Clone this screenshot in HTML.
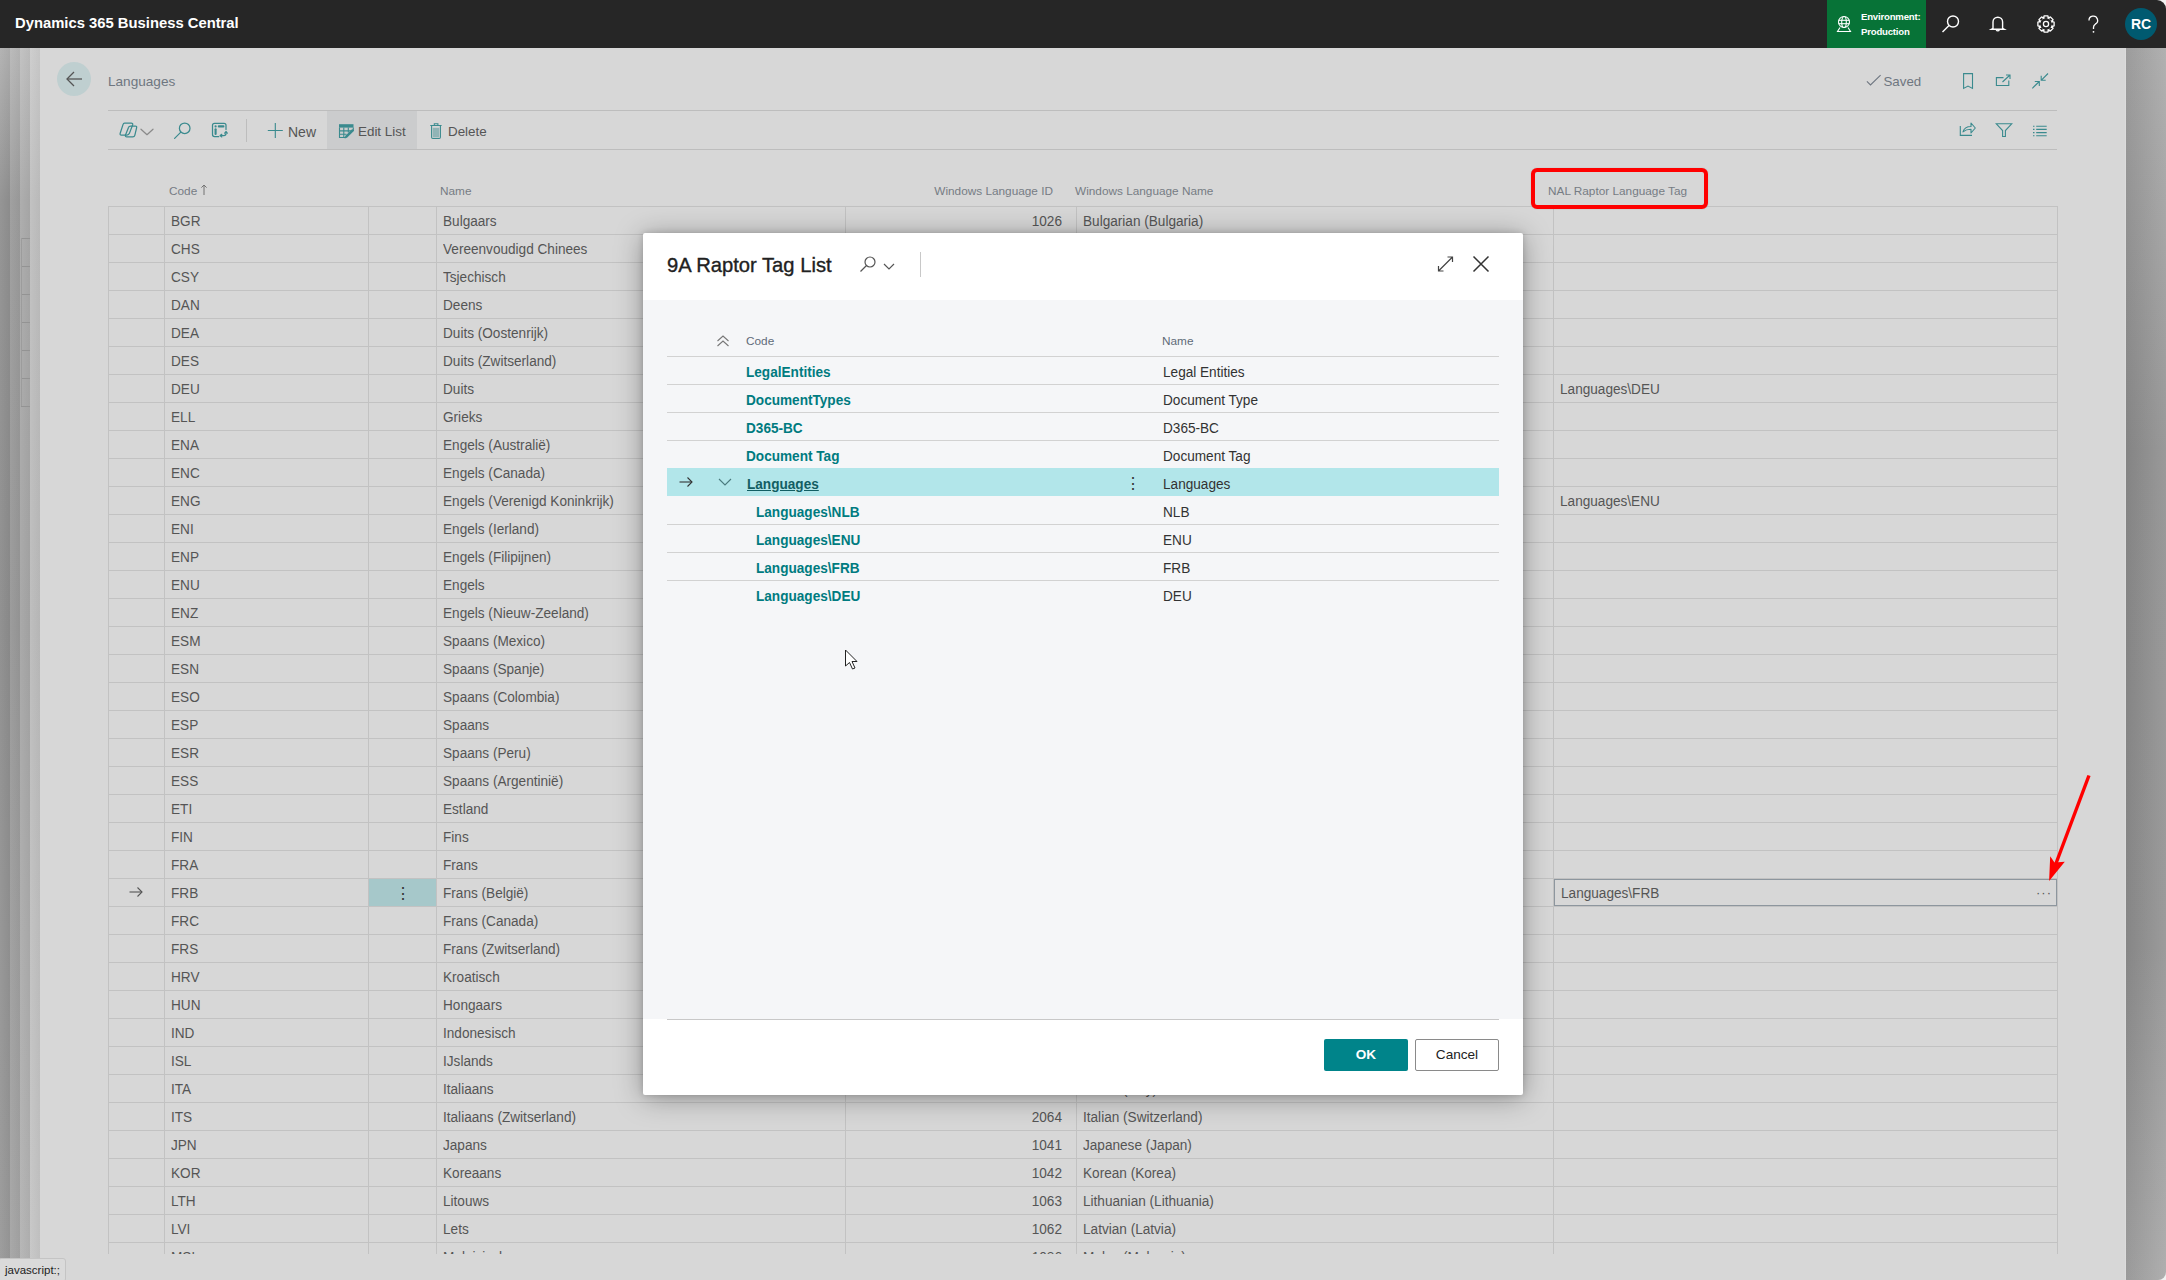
<!DOCTYPE html><html><head><meta charset="utf-8"><style>
*{box-sizing:border-box;margin:0;padding:0}
html,body{width:2166px;height:1280px;overflow:hidden;background:#d6d6d6;font-family:"Liberation Sans",sans-serif;}
.a{position:absolute}
.t{position:absolute;white-space:nowrap;line-height:1}
#top{left:0;top:0;width:2166px;height:48px;background:#262626;border-top-right-radius:9px}
#panel{left:40px;top:48px;width:2085px;height:1232px;background:#d7d7d7}
.hl{position:absolute;height:1px;background:#c2c2c2}
.vl{position:absolute;width:1px;background:#c2c2c2}
.g{font-size:14px;color:#555;transform:scaleX(0.9714);transform-origin:0 0}
.gr{transform-origin:100% 0}
.gh{font-size:11.8px;color:#767c84;}
.dt{font-size:14px;font-weight:bold;color:#007b80;transform:scaleX(0.9714);transform-origin:0 0}
.dn{font-size:14px;color:#323232;transform:scaleX(0.9714);transform-origin:0 0}
</style></head><body><div class="a" style="left:2150px;top:0;width:16px;height:16px;background:#f2f2f2"></div>
<div class="a" id="top"></div>
<div class="t" style="left:15px;top:15.5px;font-size:14.8px;font-weight:bold;color:#fff">Dynamics 365 Business Central</div>
<div class="a" style="left:1827px;top:0;width:99px;height:48px;background:#077337"></div>
<div class="t" style="left:1861px;top:12.3px;font-size:9.6px;font-weight:bold;color:#fff;letter-spacing:-0.2px">Environment:</div>
<div class="t" style="left:1861px;top:27.3px;font-size:9.6px;font-weight:bold;color:#fff;letter-spacing:-0.2px">Production</div>
<svg class="a" style="left:1835px;top:15px" width="18" height="18" viewBox="0 0 18 18" fill="none" stroke="#fff" stroke-width="1.1">
<circle cx="9" cy="7" r="5.5"/><ellipse cx="9" cy="7" rx="2.3" ry="5.5"/><line x1="3.5" y1="5.3" x2="14.5" y2="5.3"/><line x1="3.5" y1="8.7" x2="14.5" y2="8.7"/>
<path d="M5 12.5 L2.5 16.5 H15.5 L13 12.5"/></svg>
<svg class="a" style="left:1940px;top:13px" width="22" height="22" viewBox="0 0 22 22" fill="none" stroke="#fff" stroke-width="1.4">
<circle cx="13" cy="8.5" r="5.5"/><line x1="9" y1="12.5" x2="2.5" y2="19"/></svg>
<svg class="a" style="left:1987px;top:13px" width="22" height="22" viewBox="0 0 22 22" fill="none" stroke="#fff" stroke-width="1.4">
<path d="M6 15.3 V9 A4.8 4.8 0 0 1 15.6 9 V15.3 L17.3 16.3 H4.3 Z"/><path d="M9.3 16.8 A1.6 1.6 0 0 0 12.3 16.8"/></svg>
<svg class="a" style="left:2035px;top:13px" width="22" height="22" viewBox="0 0 22 22" fill="none" stroke="#fff" stroke-width="1.3">
<path d="M19.10 9.19 L19.10 12.81 L16.67 13.74 L16.95 13.07 L18.01 15.45 L15.45 18.01 L13.07 16.95 L13.74 16.67 L12.81 19.10 L9.19 19.10 L8.26 16.67 L8.93 16.95 L6.55 18.01 L3.99 15.45 L5.05 13.07 L5.33 13.74 L2.90 12.81 L2.90 9.19 L5.33 8.26 L5.05 8.93 L3.99 6.55 L6.55 3.99 L8.93 5.05 L8.26 5.33 L9.19 2.90 L12.81 2.90 L13.74 5.33 L13.07 5.05 L15.45 3.99 L18.01 6.55 L16.95 8.93 L16.67 8.26 Z"/><circle cx="11" cy="11" r="2.6"/></svg>
<svg class="a" style="left:2083px;top:12px" width="20" height="24" viewBox="0 0 20 24" fill="none" stroke="#fff" stroke-width="1.3"><path d="M6 8.5 A4.3 4.3 0 1 1 12.3 12.2 Q10.5 13.3 10.5 15.5 V17"/><circle cx="10.5" cy="19.8" r="0.9" fill="#fff" stroke="none"/></svg>
<div class="a" style="left:2125px;top:8px;width:32px;height:32px;border-radius:50%;background:#005a70"></div>
<div class="t" style="left:2131px;top:17px;font-size:14px;font-weight:bold;color:#fff">RC</div>
<div class="a" style="left:0px;top:48px;width:10px;height:1232px;background:linear-gradient(90deg,rgba(255,255,255,0.05),rgba(0,0,0,0.03)),linear-gradient(180deg,#b0b0b0 0px,#909090 152px,#8c8c8c 582px,#999999 1232px)"></div>
<div class="a" style="left:10px;top:48px;width:10px;height:1232px;background:linear-gradient(90deg,rgba(255,255,255,0.05),rgba(0,0,0,0.03)),linear-gradient(180deg,#b8b8b8 0px,#9c9c9c 152px,#979797 582px,#a5a5a5 1232px)"></div>
<div class="a" style="left:20px;top:48px;width:10px;height:1232px;background:linear-gradient(90deg,rgba(255,255,255,0.05),rgba(0,0,0,0.03)),linear-gradient(180deg,#c0c0c0 0px,#aaaaaa 152px,#a5a5a5 582px,#b4b4b4 1232px)"></div>
<div class="a" style="left:30px;top:48px;width:10px;height:1232px;background:linear-gradient(90deg,rgba(255,255,255,0.05),rgba(0,0,0,0.03)),linear-gradient(180deg,#cccccc 0px,#bfbfbf 152px,#bbbbbb 582px,#c6c6c6 1232px)"></div>
<div class="a" style="left:21px;top:238px;width:9px;height:1px;background:#939393"></div>
<div class="a" style="left:21px;top:266px;width:9px;height:1px;background:#939393"></div>
<div class="a" style="left:21px;top:294px;width:9px;height:1px;background:#939393"></div>
<div class="a" style="left:21px;top:322px;width:9px;height:1px;background:#939393"></div>
<div class="a" style="left:21px;top:350px;width:9px;height:1px;background:#939393"></div>
<div class="a" style="left:21px;top:378px;width:9px;height:1px;background:#939393"></div>
<div class="a" style="left:21px;top:406px;width:9px;height:1px;background:#939393"></div>
<div class="a" style="left:21px;top:238px;width:1px;height:168px;background:#9c9c9c"></div>
<div class="a" style="left:2150px;top:1264px;width:16px;height:16px;background:#f2f2f2"></div>
<div class="a" style="left:2126px;top:48px;width:40px;height:1232px;background:linear-gradient(90deg,rgba(0,0,0,0.07),rgba(255,255,255,0.10)),linear-gradient(180deg,#a8a8a8 0px,#8e8e8e 400px,#909090 900px,#a6a6a6 1232px);border-bottom-right-radius:8px"></div>
<div class="a" style="left:2125px;top:48px;width:1px;height:1232px;background:#dcdcdc"></div>
<div class="a" id="panel"></div>
<div class="a" style="left:57px;top:62px;width:34px;height:34px;border-radius:50%;background:#bfcfd0"></div>
<svg class="a" style="left:64px;top:69px" width="20" height="20" viewBox="0 0 20 20" fill="none" stroke="#555" stroke-width="1.3">
<line x1="3" y1="10" x2="18" y2="10"/><path d="M10 3 L3 10 L10 17"/></svg>
<div class="t" style="left:108px;top:75px;font-size:13.6px;color:#6e7680">Languages</div>
<div class="hl" style="left:108px;top:110px;width:1949px;background:#bdbdbd"></div>
<div class="hl" style="left:108px;top:149px;width:1949px;background:#bdbdbd"></div>
<svg class="a" style="left:1850px;top:60px" width="210" height="90" viewBox="1850 60 210 90" fill="none" stroke-width="1.1">
<path d="M1866.9 81.3 L1870.5 84.9 L1880.6 75.2" stroke="#6e7680"/>
<path d="M1963.6 73.6 H1972.5 V88.4 L1968 86 L1963.6 88.4 Z" stroke="#3a8a8e"/>
<path d="M2003.5 77.6 H1996.4 V85.5 H2008.8 V80.5" stroke="#3a8a8e"/>
<path d="M2002.5 82 L2010 75 M2006 75 H2010 V79" stroke="#3a8a8e"/>
<path d="M2048 73.5 L2041.2 80.3 M2041.2 75.8 V80.3 H2045.7" stroke="#3a8a8e"/>
<path d="M2032.3 88.3 L2039.3 81.5 M2034.8 81.5 H2039.3 V86" stroke="#3a8a8e"/>
<path d="M1960.3 126 V135.4 H1972" stroke="#3a8a8e"/>
<path d="M1963 131.8 Q1964.5 126.5 1971 126.5 V123 L1975.3 128 L1971 133 V129.3 Q1966 129.3 1963 131.8 Z" stroke="#3a8a8e" stroke-linejoin="round"/>
<path d="M1996.3 123.8 H2011.7 L2005.4 130.5 V136.5 H2002.6 V130.5 Z" stroke="#3a8a8e"/>
<path d="M2033 126.2 H2034.5 M2036.2 126.2 H2046.7 M2033 129.4 H2034.5 M2036.2 129.4 H2046.7 M2033 132.6 H2034.5 M2036.2 132.6 H2046.7 M2033 135.8 H2034.5 M2036.2 135.8 H2046.7" stroke="#3a8a8e"/>
</svg>
<div class="t" style="left:1883.5px;top:74.5px;font-size:13.3px;color:#6e7680">Saved</div>
<svg class="a" style="left:115px;top:115px" width="120" height="30" viewBox="0 0 120 30" fill="none" stroke-width="1.25" stroke-linejoin="round" stroke-linecap="round">
<path d="M9.5 8.2 H16.2 Q18.2 8.2 17.6 10 L14.3 18.6 Q13.7 20 12 20 H6.5 Q4.6 20 5.2 18.2 L8 9.6 Q8.4 8.2 9.5 8.2 Z" stroke="#3a8a8e"/>
<path d="M15.5 11 H20.3 Q22 11 21.6 12.8 L19.8 20.3 Q19.4 21.8 17.8 21.8 H11.8 Q10 21.8 10.4 20.2 L13.6 12.2 Q14 11 15.5 11 Z" stroke="#3a8a8e"/>
<path d="M26 14.2 L32 19.7 L38 14.2" stroke="#8a8a8a"/>
<circle cx="69.7" cy="13.3" r="5.3" stroke="#3a8a8e"/><line x1="65.6" y1="17.4" x2="59.6" y2="23.4" stroke="#3a8a8e"/>
<path d="M111 14.5 V10.3 Q111 8.3 109 8.3 H99.5 Q97.5 8.3 97.5 10.3 V19.6 Q97.5 21.6 99.5 21.6 H103.8" stroke="#3a8a8e"/>
<circle cx="100.6" cy="11.4" r="1.1" fill="#3a8a8e" stroke="none"/>
<line x1="103.8" y1="11.4" x2="108.4" y2="11.4" stroke="#3a8a8e" stroke-width="2.1"/>
<line x1="100.6" y1="14.3" x2="100.6" y2="19" stroke="#3a8a8e" stroke-width="2.1"/>
<path d="M111 17 V18.5 Q111 20.6 108.8 20.6 H105.5" stroke="#3a8a8e"/>
<path d="M109.7 18.2 L111 16.6 L112.3 18.2 M106.8 19.3 L105.2 20.6 L106.8 21.9" stroke="#3a8a8e"/>
</svg>
<div class="vl" style="left:246px;top:119px;height:23px;background:#bdbdbd"></div>
<div class="t" style="left:288px;top:125px;font-size:14px;color:#555">New</div>
<div class="a" style="left:327px;top:111px;width:90px;height:38px;background:#cbcccd"></div>
<div class="t" style="left:358px;top:125px;font-size:13.4px;color:#555">Edit List</div>
<svg class="a" style="left:260px;top:115px" width="190" height="30" viewBox="260 115 190 30" fill="none" stroke="#3a8a8e" stroke-width="1.1">
<path d="M275.3 123 V138 M267.8 130.5 H282.8"/>
<rect x="339" y="124.2" width="14.5" height="3.4" fill="#3a8a8e" stroke="none"/>
<path d="M339.5 127.5 V137.5 H346 M353.3 127.5 V131 M343.8 127.5 V137.5 M348.3 127.5 V132.5 M339.5 130.9 H352 M339.5 134.3 H346.5"/>
<path d="M345.8 137.2 L353.2 129.8" stroke-width="2.6"/>
<path d="M344.6 138.4 L345.3 136.2 L346.9 137.8 Z" fill="#3a8a8e" stroke="none"/>
<path d="M434.3 125 V123.8 H437.9 V125 M430.3 125.5 H441.6"/>
<path d="M431.6 125.8 V137.3 Q431.6 138.5 432.8 138.5 H439.2 Q440.4 138.5 440.4 137.3 V125.8"/>
<rect x="432.8" y="127.8" width="6.4" height="9.6" fill="#3a8a8e" stroke="none" opacity="0.45"/>
</svg>
<div class="t" style="left:448px;top:125px;font-size:13.4px;color:#555">Delete</div>
<div class="t gh" style="left:169px;top:185.5px">Code</div>
<svg class="a" style="left:199.5px;top:184px" width="8" height="12" viewBox="0 0 8 12" fill="none" stroke="#737373" stroke-width="1"><line x1="4" y1="1" x2="4" y2="11"/><path d="M1.4 3.6 L4 1 L6.6 3.6"/></svg>
<div class="t gh" style="left:440px;top:185.5px">Name</div>
<div class="t gh" style="left:933px;top:185.5px;width:120px;text-align:right">Windows Language ID</div>
<div class="t gh" style="left:1075px;top:185.5px">Windows Language Name</div>
<div class="t gh" style="left:1548px;top:185.5px">NAL Raptor Language Tag</div>
<div class="a" style="left:108px;top:206px;width:1950px;height:1048px;overflow:hidden">
<div class="hl" style="left:0;top:0px;width:1950px"></div>
<div class="hl" style="left:0;top:28px;width:1950px"></div>
<div class="hl" style="left:0;top:56px;width:1950px"></div>
<div class="hl" style="left:0;top:84px;width:1950px"></div>
<div class="hl" style="left:0;top:112px;width:1950px"></div>
<div class="hl" style="left:0;top:140px;width:1950px"></div>
<div class="hl" style="left:0;top:168px;width:1950px"></div>
<div class="hl" style="left:0;top:196px;width:1950px"></div>
<div class="hl" style="left:0;top:224px;width:1950px"></div>
<div class="hl" style="left:0;top:252px;width:1950px"></div>
<div class="hl" style="left:0;top:280px;width:1950px"></div>
<div class="hl" style="left:0;top:308px;width:1950px"></div>
<div class="hl" style="left:0;top:336px;width:1950px"></div>
<div class="hl" style="left:0;top:364px;width:1950px"></div>
<div class="hl" style="left:0;top:392px;width:1950px"></div>
<div class="hl" style="left:0;top:420px;width:1950px"></div>
<div class="hl" style="left:0;top:448px;width:1950px"></div>
<div class="hl" style="left:0;top:476px;width:1950px"></div>
<div class="hl" style="left:0;top:504px;width:1950px"></div>
<div class="hl" style="left:0;top:532px;width:1950px"></div>
<div class="hl" style="left:0;top:560px;width:1950px"></div>
<div class="hl" style="left:0;top:588px;width:1950px"></div>
<div class="hl" style="left:0;top:616px;width:1950px"></div>
<div class="hl" style="left:0;top:644px;width:1950px"></div>
<div class="hl" style="left:0;top:672px;width:1950px"></div>
<div class="hl" style="left:0;top:700px;width:1950px"></div>
<div class="hl" style="left:0;top:728px;width:1950px"></div>
<div class="hl" style="left:0;top:756px;width:1950px"></div>
<div class="hl" style="left:0;top:784px;width:1950px"></div>
<div class="hl" style="left:0;top:812px;width:1950px"></div>
<div class="hl" style="left:0;top:840px;width:1950px"></div>
<div class="hl" style="left:0;top:868px;width:1950px"></div>
<div class="hl" style="left:0;top:896px;width:1950px"></div>
<div class="hl" style="left:0;top:924px;width:1950px"></div>
<div class="hl" style="left:0;top:952px;width:1950px"></div>
<div class="hl" style="left:0;top:980px;width:1950px"></div>
<div class="hl" style="left:0;top:1008px;width:1950px"></div>
<div class="hl" style="left:0;top:1036px;width:1950px"></div>
<div class="hl" style="left:0;top:1064px;width:1950px"></div>
<div class="vl" style="left:0px;top:0;height:1048px"></div>
<div class="vl" style="left:56px;top:0;height:1048px"></div>
<div class="vl" style="left:260px;top:0;height:1048px"></div>
<div class="vl" style="left:328px;top:0;height:1048px"></div>
<div class="vl" style="left:737px;top:0;height:1048px"></div>
<div class="vl" style="left:968px;top:0;height:1048px"></div>
<div class="vl" style="left:1445px;top:0;height:1048px"></div>
<div class="vl" style="left:1949px;top:0;height:1048px"></div>
<div class="t g" style="left:63px;top:8px">BGR</div>
<div class="t g" style="left:335px;top:8px">Bulgaars</div>
<div class="t g gr" style="left:854px;top:8px;width:100px;text-align:right">1026</div>
<div class="t g" style="left:975px;top:8px">Bulgarian (Bulgaria)</div>
<div class="t g" style="left:63px;top:36px">CHS</div>
<div class="t g" style="left:335px;top:36px">Vereenvoudigd Chinees</div>
<div class="t g gr" style="left:854px;top:36px;width:100px;text-align:right">2052</div>
<div class="t g" style="left:975px;top:36px">Chinese (Simplified)</div>
<div class="t g" style="left:63px;top:64px">CSY</div>
<div class="t g" style="left:335px;top:64px">Tsjechisch</div>
<div class="t g gr" style="left:854px;top:64px;width:100px;text-align:right">1029</div>
<div class="t g" style="left:975px;top:64px">Czech (Czech Republic)</div>
<div class="t g" style="left:63px;top:92px">DAN</div>
<div class="t g" style="left:335px;top:92px">Deens</div>
<div class="t g gr" style="left:854px;top:92px;width:100px;text-align:right">1030</div>
<div class="t g" style="left:975px;top:92px">Danish (Denmark)</div>
<div class="t g" style="left:63px;top:120px">DEA</div>
<div class="t g" style="left:335px;top:120px">Duits (Oostenrijk)</div>
<div class="t g gr" style="left:854px;top:120px;width:100px;text-align:right">3079</div>
<div class="t g" style="left:975px;top:120px">German (Austria)</div>
<div class="t g" style="left:63px;top:148px">DES</div>
<div class="t g" style="left:335px;top:148px">Duits (Zwitserland)</div>
<div class="t g gr" style="left:854px;top:148px;width:100px;text-align:right">2055</div>
<div class="t g" style="left:975px;top:148px">German (Switzerland)</div>
<div class="t g" style="left:63px;top:176px">DEU</div>
<div class="t g" style="left:335px;top:176px">Duits</div>
<div class="t g gr" style="left:854px;top:176px;width:100px;text-align:right">1031</div>
<div class="t g" style="left:975px;top:176px">German (Germany)</div>
<div class="t g" style="left:1452px;top:176px">Languages\DEU</div>
<div class="t g" style="left:63px;top:204px">ELL</div>
<div class="t g" style="left:335px;top:204px">Grieks</div>
<div class="t g gr" style="left:854px;top:204px;width:100px;text-align:right">1032</div>
<div class="t g" style="left:975px;top:204px">Greek (Greece)</div>
<div class="t g" style="left:63px;top:232px">ENA</div>
<div class="t g" style="left:335px;top:232px">Engels (Australië)</div>
<div class="t g gr" style="left:854px;top:232px;width:100px;text-align:right">3081</div>
<div class="t g" style="left:975px;top:232px">English (Australia)</div>
<div class="t g" style="left:63px;top:260px">ENC</div>
<div class="t g" style="left:335px;top:260px">Engels (Canada)</div>
<div class="t g gr" style="left:854px;top:260px;width:100px;text-align:right">4105</div>
<div class="t g" style="left:975px;top:260px">English (Canada)</div>
<div class="t g" style="left:63px;top:288px">ENG</div>
<div class="t g" style="left:335px;top:288px">Engels (Verenigd Koninkrijk)</div>
<div class="t g gr" style="left:854px;top:288px;width:100px;text-align:right">2057</div>
<div class="t g" style="left:975px;top:288px">English (United Kingdom)</div>
<div class="t g" style="left:1452px;top:288px">Languages\ENU</div>
<div class="t g" style="left:63px;top:316px">ENI</div>
<div class="t g" style="left:335px;top:316px">Engels (Ierland)</div>
<div class="t g gr" style="left:854px;top:316px;width:100px;text-align:right">6153</div>
<div class="t g" style="left:975px;top:316px">English (Ireland)</div>
<div class="t g" style="left:63px;top:344px">ENP</div>
<div class="t g" style="left:335px;top:344px">Engels (Filipijnen)</div>
<div class="t g gr" style="left:854px;top:344px;width:100px;text-align:right">13321</div>
<div class="t g" style="left:975px;top:344px">English (Philippines)</div>
<div class="t g" style="left:63px;top:372px">ENU</div>
<div class="t g" style="left:335px;top:372px">Engels</div>
<div class="t g gr" style="left:854px;top:372px;width:100px;text-align:right">1033</div>
<div class="t g" style="left:975px;top:372px">English (United States)</div>
<div class="t g" style="left:63px;top:400px">ENZ</div>
<div class="t g" style="left:335px;top:400px">Engels (Nieuw-Zeeland)</div>
<div class="t g gr" style="left:854px;top:400px;width:100px;text-align:right">5129</div>
<div class="t g" style="left:975px;top:400px">English (New Zealand)</div>
<div class="t g" style="left:63px;top:428px">ESM</div>
<div class="t g" style="left:335px;top:428px">Spaans (Mexico)</div>
<div class="t g gr" style="left:854px;top:428px;width:100px;text-align:right">2058</div>
<div class="t g" style="left:975px;top:428px">Spanish (Mexico)</div>
<div class="t g" style="left:63px;top:456px">ESN</div>
<div class="t g" style="left:335px;top:456px">Spaans (Spanje)</div>
<div class="t g gr" style="left:854px;top:456px;width:100px;text-align:right">3082</div>
<div class="t g" style="left:975px;top:456px">Spanish (Spain)</div>
<div class="t g" style="left:63px;top:484px">ESO</div>
<div class="t g" style="left:335px;top:484px">Spaans (Colombia)</div>
<div class="t g gr" style="left:854px;top:484px;width:100px;text-align:right">9226</div>
<div class="t g" style="left:975px;top:484px">Spanish (Colombia)</div>
<div class="t g" style="left:63px;top:512px">ESP</div>
<div class="t g" style="left:335px;top:512px">Spaans</div>
<div class="t g gr" style="left:854px;top:512px;width:100px;text-align:right">1034</div>
<div class="t g" style="left:975px;top:512px">Spanish (Spain)</div>
<div class="t g" style="left:63px;top:540px">ESR</div>
<div class="t g" style="left:335px;top:540px">Spaans (Peru)</div>
<div class="t g gr" style="left:854px;top:540px;width:100px;text-align:right">10250</div>
<div class="t g" style="left:975px;top:540px">Spanish (Peru)</div>
<div class="t g" style="left:63px;top:568px">ESS</div>
<div class="t g" style="left:335px;top:568px">Spaans (Argentinië)</div>
<div class="t g gr" style="left:854px;top:568px;width:100px;text-align:right">11274</div>
<div class="t g" style="left:975px;top:568px">Spanish (Argentina)</div>
<div class="t g" style="left:63px;top:596px">ETI</div>
<div class="t g" style="left:335px;top:596px">Estland</div>
<div class="t g gr" style="left:854px;top:596px;width:100px;text-align:right">1061</div>
<div class="t g" style="left:975px;top:596px">Estonian (Estonia)</div>
<div class="t g" style="left:63px;top:624px">FIN</div>
<div class="t g" style="left:335px;top:624px">Fins</div>
<div class="t g gr" style="left:854px;top:624px;width:100px;text-align:right">1035</div>
<div class="t g" style="left:975px;top:624px">Finnish (Finland)</div>
<div class="t g" style="left:63px;top:652px">FRA</div>
<div class="t g" style="left:335px;top:652px">Frans</div>
<div class="t g gr" style="left:854px;top:652px;width:100px;text-align:right">1036</div>
<div class="t g" style="left:975px;top:652px">French (France)</div>
<div class="t g" style="left:63px;top:680px">FRB</div>
<div class="t g" style="left:335px;top:680px">Frans (België)</div>
<div class="t g gr" style="left:854px;top:680px;width:100px;text-align:right">2060</div>
<div class="t g" style="left:975px;top:680px">French (Belgium)</div>
<div class="t g" style="left:63px;top:708px">FRC</div>
<div class="t g" style="left:335px;top:708px">Frans (Canada)</div>
<div class="t g gr" style="left:854px;top:708px;width:100px;text-align:right">3084</div>
<div class="t g" style="left:975px;top:708px">French (Canada)</div>
<div class="t g" style="left:63px;top:736px">FRS</div>
<div class="t g" style="left:335px;top:736px">Frans (Zwitserland)</div>
<div class="t g gr" style="left:854px;top:736px;width:100px;text-align:right">4108</div>
<div class="t g" style="left:975px;top:736px">French (Switzerland)</div>
<div class="t g" style="left:63px;top:764px">HRV</div>
<div class="t g" style="left:335px;top:764px">Kroatisch</div>
<div class="t g gr" style="left:854px;top:764px;width:100px;text-align:right">1050</div>
<div class="t g" style="left:975px;top:764px">Croatian (Croatia)</div>
<div class="t g" style="left:63px;top:792px">HUN</div>
<div class="t g" style="left:335px;top:792px">Hongaars</div>
<div class="t g gr" style="left:854px;top:792px;width:100px;text-align:right">1038</div>
<div class="t g" style="left:975px;top:792px">Hungarian (Hungary)</div>
<div class="t g" style="left:63px;top:820px">IND</div>
<div class="t g" style="left:335px;top:820px">Indonesisch</div>
<div class="t g gr" style="left:854px;top:820px;width:100px;text-align:right">1057</div>
<div class="t g" style="left:975px;top:820px">Indonesian (Indonesia)</div>
<div class="t g" style="left:63px;top:848px">ISL</div>
<div class="t g" style="left:335px;top:848px">IJslands</div>
<div class="t g gr" style="left:854px;top:848px;width:100px;text-align:right">1039</div>
<div class="t g" style="left:975px;top:848px">Icelandic (Iceland)</div>
<div class="t g" style="left:63px;top:876px">ITA</div>
<div class="t g" style="left:335px;top:876px">Italiaans</div>
<div class="t g gr" style="left:854px;top:876px;width:100px;text-align:right">1040</div>
<div class="t g" style="left:975px;top:876px">Italian (Italy)</div>
<div class="t g" style="left:63px;top:904px">ITS</div>
<div class="t g" style="left:335px;top:904px">Italiaans (Zwitserland)</div>
<div class="t g gr" style="left:854px;top:904px;width:100px;text-align:right">2064</div>
<div class="t g" style="left:975px;top:904px">Italian (Switzerland)</div>
<div class="t g" style="left:63px;top:932px">JPN</div>
<div class="t g" style="left:335px;top:932px">Japans</div>
<div class="t g gr" style="left:854px;top:932px;width:100px;text-align:right">1041</div>
<div class="t g" style="left:975px;top:932px">Japanese (Japan)</div>
<div class="t g" style="left:63px;top:960px">KOR</div>
<div class="t g" style="left:335px;top:960px">Koreaans</div>
<div class="t g gr" style="left:854px;top:960px;width:100px;text-align:right">1042</div>
<div class="t g" style="left:975px;top:960px">Korean (Korea)</div>
<div class="t g" style="left:63px;top:988px">LTH</div>
<div class="t g" style="left:335px;top:988px">Litouws</div>
<div class="t g gr" style="left:854px;top:988px;width:100px;text-align:right">1063</div>
<div class="t g" style="left:975px;top:988px">Lithuanian (Lithuania)</div>
<div class="t g" style="left:63px;top:1016px">LVI</div>
<div class="t g" style="left:335px;top:1016px">Lets</div>
<div class="t g gr" style="left:854px;top:1016px;width:100px;text-align:right">1062</div>
<div class="t g" style="left:975px;top:1016px">Latvian (Latvia)</div>
<div class="t g" style="left:63px;top:1044px">MSL</div>
<div class="t g" style="left:335px;top:1044px">Maleisisch</div>
<div class="t g gr" style="left:854px;top:1044px;width:100px;text-align:right">1086</div>
<div class="t g" style="left:975px;top:1044px">Malay (Malaysia)</div>
<div class="a" style="left:261px;top:673px;width:67px;height:27px;background:#a6c8ca"></div>
<div class="t" style="left:286.5px;top:680px;font-size:16px;color:#333">&#8942;</div>
<svg class="a" style="left:20px;top:678px" width="16" height="16" viewBox="0 0 16 16" fill="none" stroke="#555" stroke-width="1.1"><line x1="1.5" y1="8" x2="14" y2="8"/><path d="M9.5 3.5 L14 8 L9.5 12.5"/></svg>
<div class="a" style="left:1446px;top:673px;width:503px;height:27px;border:1px solid #8d969e;background:#d7d7d7"></div>
<div class="t g" style="left:1453px;top:680px">Languages\FRB</div>
<div class="t" style="left:1928px;top:680px;font-size:13px;color:#555;letter-spacing:1px">&#183;&#183;&#183;</div>
</div>
<div class="a" style="left:1531px;top:168px;width:177px;height:41px;border:4px solid #ff0000;border-radius:6px;box-shadow:0 0 1px rgba(0,0,0,0.3)"></div>
<svg class="a" style="left:2030px;top:760px" width="70" height="130" viewBox="0 0 70 130">
<line x1="59" y1="15.5" x2="25" y2="106" stroke="#ff0000" stroke-width="3.4"/>
<path d="M19.1 121 L20.2 96.3 L24.5 102.5 L34.8 101.8 Z" fill="#ff0000"/></svg>
<div class="a" style="left:643px;top:233px;width:880px;height:862px;background:#fff;border-radius:2px;box-shadow:0 3px 28px rgba(0,0,0,0.34),0 0 6px rgba(0,0,0,0.16)"></div>
<div class="a" style="left:643px;top:300px;width:880px;height:719px;background:#f5f6f8"></div>
<div class="t" style="left:667px;top:255px;font-size:20.2px;color:#212121;-webkit-text-stroke:0.35px #212121">9A Raptor Tag List</div>
<svg class="a" style="left:858px;top:255px" width="40" height="20" viewBox="0 0 40 20" fill="none" stroke="#555" stroke-width="1.2"><circle cx="12" cy="7" r="5"/><line x1="8.5" y1="10.5" x2="2.5" y2="16.5"/><path d="M26 9 L31 14 L36 9"/></svg>
<div class="vl" style="left:920px;top:252px;height:25px;background:#c8c8c8"></div>
<svg class="a" style="left:1434px;top:254px" width="20" height="20" viewBox="0 0 20 20" fill="none" stroke="#444" stroke-width="1.2"><path d="M4.5 17 L18.5 3 M13.5 3 H18.5 V8 M4.5 12 V17 H9.5"/></svg>
<svg class="a" style="left:1470px;top:254px" width="20" height="20" viewBox="0 0 20 20" fill="none" stroke="#333" stroke-width="1.5"><path d="M3.5 2.5 L18.5 17.5 M18.5 2.5 L3.5 17.5"/></svg>
<div class="t gh" style="left:746px;top:335.5px;color:#5f6b78">Code</div>
<div class="t gh" style="left:1162px;top:335.5px;color:#5f6b78">Name</div>
<svg class="a" style="left:715px;top:333px" width="16" height="16" viewBox="0 0 16 16" fill="none" stroke="#777" stroke-width="1.1"><path d="M2.5 8 L8 3 L13.5 8 M2.5 13 L8 8 L13.5 13"/></svg>
<div class="hl" style="left:667px;top:356px;width:832px;background:#d2d2d2"></div>
<div class="hl" style="left:667px;top:384px;width:832px;background:#d2d2d2"></div>
<div class="t dt" style="left:746px;top:365px;color:#007b80">LegalEntities</div>
<div class="t dn" style="left:1163px;top:365px">Legal Entities</div>
<div class="hl" style="left:667px;top:412px;width:832px;background:#d2d2d2"></div>
<div class="t dt" style="left:746px;top:393px;color:#007b80">DocumentTypes</div>
<div class="t dn" style="left:1163px;top:393px">Document Type</div>
<div class="hl" style="left:667px;top:440px;width:832px;background:#d2d2d2"></div>
<div class="t dt" style="left:746px;top:421px;color:#007b80">D365-BC</div>
<div class="t dn" style="left:1163px;top:421px">D365-BC</div>
<div class="t dt" style="left:746px;top:449px;color:#007b80">Document Tag</div>
<div class="t dn" style="left:1163px;top:449px">Document Tag</div>
<div class="a" style="left:667px;top:468px;width:832px;height:28px;background:#b2e6ea"></div>
<div class="t dt" style="left:747px;top:477px;color:#125e63;text-decoration:underline">Languages</div>
<div class="t dn" style="left:1163px;top:477px">Languages</div>
<div class="hl" style="left:667px;top:524px;width:832px;background:#d2d2d2"></div>
<div class="t dt" style="left:756px;top:505px;color:#007b80">Languages\NLB</div>
<div class="t dn" style="left:1163px;top:505px">NLB</div>
<div class="hl" style="left:667px;top:552px;width:832px;background:#d2d2d2"></div>
<div class="t dt" style="left:756px;top:533px;color:#007b80">Languages\ENU</div>
<div class="t dn" style="left:1163px;top:533px">ENU</div>
<div class="hl" style="left:667px;top:580px;width:832px;background:#d2d2d2"></div>
<div class="t dt" style="left:756px;top:561px;color:#007b80">Languages\FRB</div>
<div class="t dn" style="left:1163px;top:561px">FRB</div>
<div class="t dt" style="left:756px;top:589px;color:#007b80">Languages\DEU</div>
<div class="t dn" style="left:1163px;top:589px">DEU</div>
<svg class="a" style="left:678px;top:474px" width="16" height="16" viewBox="0 0 16 16" fill="none" stroke="#333" stroke-width="1.1"><line x1="1.5" y1="8" x2="14" y2="8"/><path d="M9.5 3.5 L14 8 L9.5 12.5"/></svg>
<svg class="a" style="left:717px;top:476px" width="16" height="12" viewBox="0 0 16 12" fill="none" stroke="#4a7a7e" stroke-width="1.1"><path d="M2 3 L8 9 L14 3"/></svg>
<div class="t" style="left:1125px;top:475.5px;font-size:16px;color:#333">&#8942;</div>
<div class="hl" style="left:667px;top:1019px;width:832px;background:#c8c8c8"></div>
<div class="a" style="left:1324px;top:1039px;width:84px;height:32px;background:#00848a;border-radius:2px"></div>
<div class="t" style="left:1324px;top:1048px;width:84px;text-align:center;font-size:13.6px;font-weight:bold;color:#fff">OK</div>
<div class="a" style="left:1415px;top:1039px;width:84px;height:32px;background:#fff;border:1px solid #8a8a8a;border-radius:2px"></div>
<div class="t" style="left:1415px;top:1048px;width:84px;text-align:center;font-size:13.6px;color:#222">Cancel</div>
<svg class="a" style="left:844px;top:649px" width="16" height="24" viewBox="0 0 16 24"><path d="M1.5 1 L1.5 17 L5.5 13.5 L8.5 20 L11 19 L8 12.5 L13 12.5 Z" fill="#fff" stroke="#222" stroke-width="1"/></svg>
<div class="a" style="left:-2px;top:1258px;width:68px;height:24px;background:#dadada;border:1px solid #c4c4c4;border-radius:3px"></div>
<div class="t" style="left:5px;top:1265px;font-size:11.5px;color:#222">javascript:;</div></body></html>
